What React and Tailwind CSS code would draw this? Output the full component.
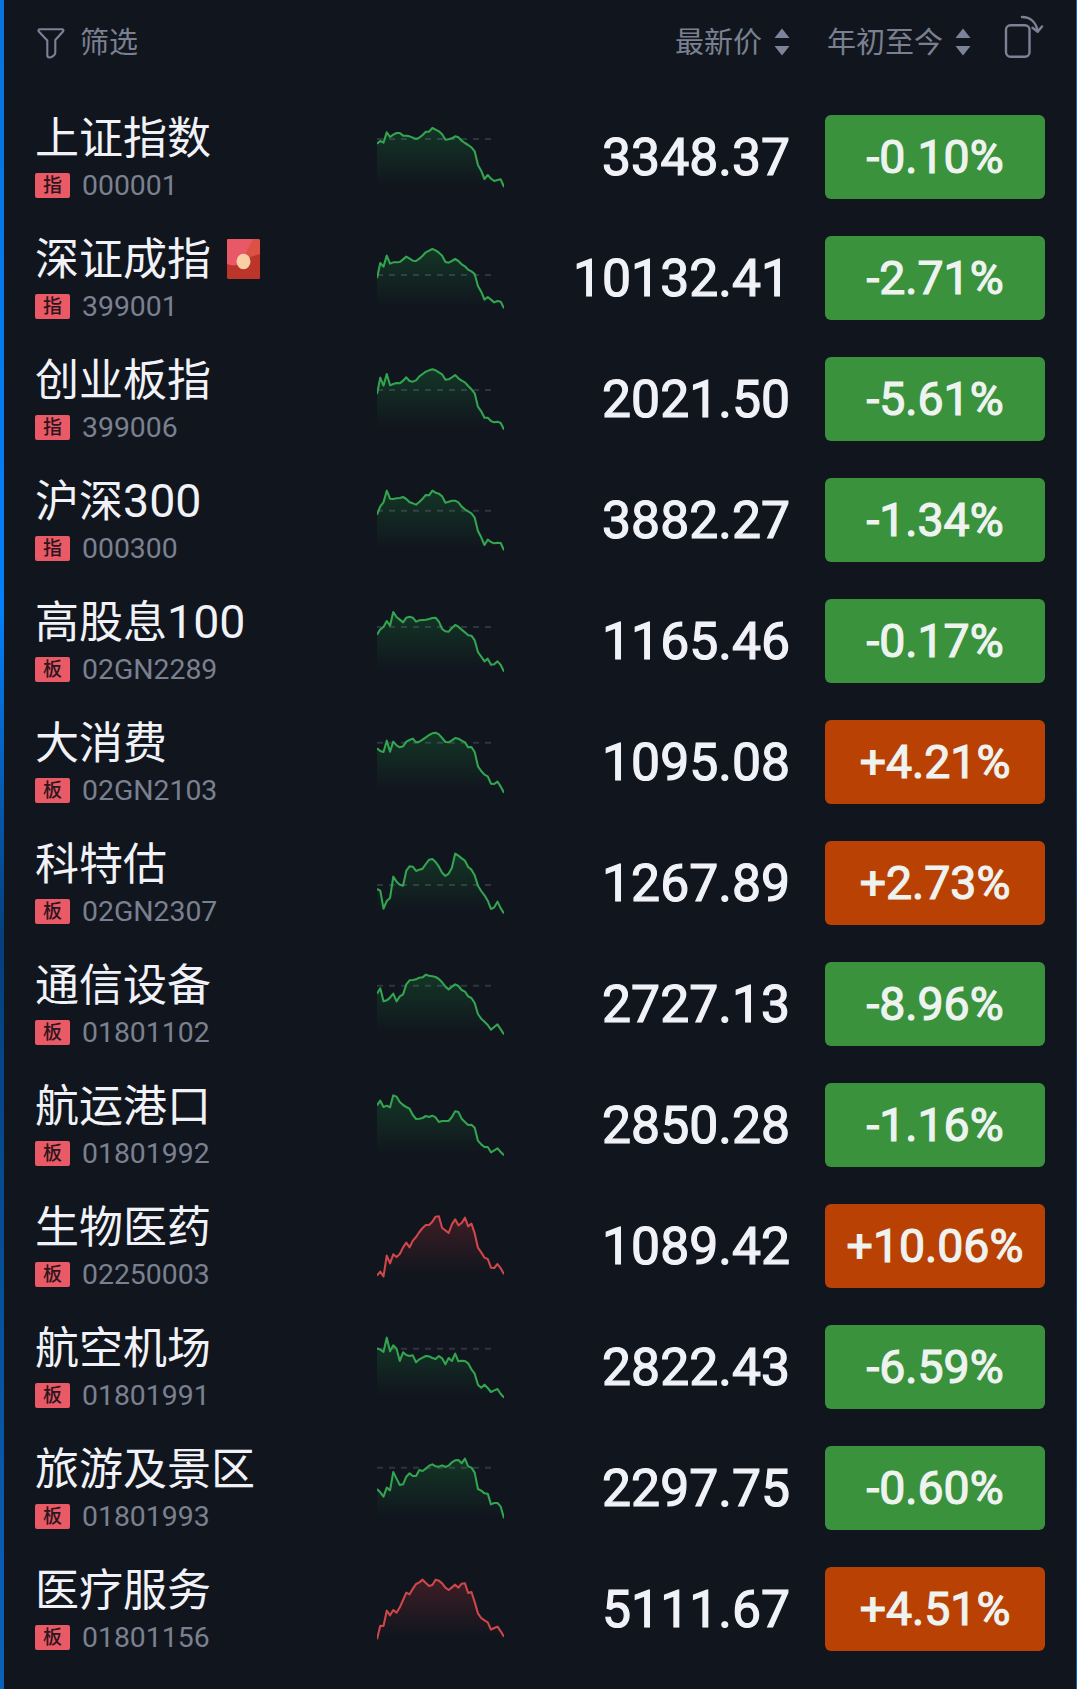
const rows = [
  {
    name: "上证指数",
    tag: "指",
    code: "000001",
    price: "3348.37",
    change: "-0.10%",
    base: 72,
    trend: [86, 78, 83, 52, 66, 59, 54, 54, 62, 62, 64, 68, 72, 68, 60, 50, 50, 39, 44, 49, 58, 74, 73, 70, 64, 67, 77, 84, 90, 97, 109, 150, 167, 192, 180, 191, 198, 195, 193, 216],
  },
  {
    name: "深证成指",
    tag: "指",
    code: "399001",
    price: "10132.41",
    change: "-2.71%",
    envelope: true,
    base: 117,
    trend: [127, 81, 92, 59, 83, 79, 79, 78, 70, 62, 68, 74, 75, 68, 59, 49, 44, 39, 43, 50, 59, 78, 80, 75, 69, 75, 85, 91, 101, 106, 114, 150, 167, 191, 183, 191, 199, 195, 197, 217],
  },
  {
    name: "创业板指",
    tag: "指",
    code: "399006",
    price: "2021.50",
    change: "-5.61%",
    base: 99,
    trend: [111, 62, 86, 51, 85, 81, 78, 79, 71, 61, 72, 74, 70, 58, 51, 44, 40, 37, 40, 46, 52, 68, 67, 61, 54, 64, 71, 76, 87, 97, 109, 149, 163, 182, 182, 192, 196, 194, 198, 218],
  },
  {
    name: "沪深",
    suffix: "300",
    tag: "指",
    code: "000300",
    price: "3882.27",
    change: "-1.34%",
    base: 98,
    trend: [110, 85, 73, 38, 62, 63, 61, 60, 57, 63, 73, 76, 80, 72, 62, 51, 52, 38, 44, 47, 55, 74, 71, 68, 68, 73, 86, 94, 100, 106, 119, 159, 178, 201, 185, 192, 196, 194, 195, 217],
  },
  {
    name: "高股息",
    suffix: "100",
    tag: "板",
    code: "02GN2289",
    price: "1165.46",
    change: "-0.17%",
    base: 84,
    trend: [107, 91, 84, 66, 80, 39, 54, 62, 70, 56, 53, 56, 68, 64, 63, 62, 60, 57, 56, 68, 90, 97, 98, 87, 78, 83, 92, 100, 109, 110, 124, 159, 173, 187, 179, 197, 196, 187, 198, 218],
  },
  {
    name: "大消费",
    tag: "板",
    code: "02GN2103",
    price: "1095.08",
    change: "+4.21%",
    base: 68,
    trend: [85, 93, 96, 62, 95, 65, 76, 82, 79, 65, 60, 56, 67, 65, 59, 52, 45, 40, 38, 43, 54, 66, 67, 61, 54, 56, 62, 67, 82, 81, 96, 139, 153, 164, 169, 191, 192, 185, 200, 218],
  },
  {
    name: "科特估",
    tag: "板",
    code: "02GN2307",
    price: "1267.89",
    change: "+2.73%",
    base: 132,
    trend: [144, 149, 203, 180, 171, 107, 122, 131, 134, 89, 76, 77, 90, 86, 83, 69, 56, 54, 63, 77, 95, 105, 98, 80, 38, 44, 52, 59, 78, 86, 103, 134, 150, 163, 179, 204, 199, 182, 202, 217],
  },
  {
    name: "通信设备",
    tag: "板",
    code: "01801102",
    price: "2727.13",
    change: "-8.96%",
    base: 71,
    trend: [95, 79, 118, 115, 107, 95, 118, 103, 97, 67, 55, 54, 52, 47, 46, 38, 41, 43, 45, 51, 61, 74, 82, 74, 67, 72, 84, 89, 103, 108, 123, 156, 170, 179, 189, 203, 195, 187, 202, 217],
  },
  {
    name: "航运港口",
    tag: "板",
    code: "01801992",
    price: "2850.28",
    change: "-1.16%",
    trend: [67, 53, 72, 68, 73, 37, 41, 57, 66, 72, 77, 96, 108, 107, 105, 99, 102, 98, 103, 117, 114, 114, 114, 102, 85, 87, 107, 117, 126, 125, 134, 173, 184, 192, 192, 208, 202, 196, 207, 217],
  },
  {
    name: "生物医药",
    tag: "板",
    code: "02250003",
    price: "1089.42",
    change: "+10.06%",
    red: true,
    trend: [215, 203, 217, 155, 178, 151, 159, 150, 130, 116, 130, 110, 99, 84, 72, 63, 63, 53, 38, 37, 72, 79, 87, 61, 46, 64, 57, 41, 67, 59, 88, 131, 145, 161, 165, 191, 192, 180, 193, 211],
  },
  {
    name: "航空机场",
    tag: "板",
    code: "01801991",
    price: "2822.43",
    change: "-6.59%",
    base: 71,
    trend: [70, 74, 81, 38, 79, 61, 71, 108, 82, 90, 93, 91, 112, 103, 98, 93, 94, 99, 102, 93, 100, 118, 99, 108, 86, 109, 107, 108, 115, 133, 146, 179, 188, 179, 189, 201, 196, 192, 207, 218],
  },
  {
    name: "旅游及景区",
    tag: "板",
    code: "01801993",
    price: "2297.75",
    change: "-0.60%",
    base: 65,
    trend: [129, 139, 152, 125, 133, 78, 98, 117, 115, 92, 82, 90, 90, 72, 75, 68, 59, 55, 61, 62, 58, 63, 59, 49, 43, 42, 52, 38, 61, 65, 80, 129, 134, 142, 143, 175, 171, 171, 182, 217],
  },
  {
    name: "医疗服务",
    tag: "板",
    code: "01801156",
    price: "5111.67",
    change: "+4.51%",
    red: true,
    trend: [217, 176, 177, 131, 145, 129, 137, 121, 99, 77, 82, 65, 51, 46, 38, 48, 57, 54, 38, 41, 49, 62, 69, 61, 53, 62, 50, 49, 78, 75, 105, 139, 153, 160, 166, 188, 183, 179, 193, 209],
  },
];

function Sparkline({ id, trend, base, red }) {
  const step = 381 / (trend.length - 1);
  const points = trend.map((y, i) => `${(i * step).toFixed(1)},${y}`).join(" ");
  const color = red ? "#d0474b" : "#33a450";

  return (
    <svg viewBox="0 0 381 252" className="w-[127px] h-[84px] shrink-0">
      <defs>
        <linearGradient id={id} gradientUnits="userSpaceOnUse" x1="0" y1="37" x2="0" y2="210">
          <stop offset="0" stopColor={red ? "#c8323c" : "#1a9a3c"} stopOpacity="0.24" />
          <stop offset="1" stopColor={red ? "#c8323c" : "#1a9a3c"} stopOpacity="0" />
        </linearGradient>
      </defs>
      <polygon points={`0,252 ${points} 381,252`} fill={`url(#${id})`} />
      {base && (
        <line x1="0" x2="342" y1={base} y2={base} stroke="#8a93a6" strokeOpacity="0.25" strokeWidth="6" strokeDasharray="18 18" />
      )}
      <polyline points={points} fill="none" stroke={color} strokeWidth="6.2" strokeLinejoin="round" />
    </svg>
  );
}

function FilterIcon() {
  return (
    <svg viewBox="0 0 28 31" className="w-7 h-[31px]" fill="none" stroke="#7b8296" strokeWidth="2.1" strokeLinejoin="round">
      <path d="M3 1.2h22c1.4 0 1.8 1.2 1 2.3L18.3 12v12.500c0 3-4.200 5-6 5-1.600 0-2-.9-2-2.500V12.500L1.800 3.600C1 2.400 1.600 1.200 3 1.200z" />
    </svg>
  );
}

function SortIcon() {
  return (
    <svg viewBox="0 0 16 28" className="w-4 h-7" fill="#7b849b">
      <path d="M8 0.500l7.500 9.500H.5z" />
      <path d="M8 27.500L.5 18h15z" />
    </svg>
  );
}

function RotateIcon() {
  return (
    <svg viewBox="0 0 40 44" className="w-10 h-11" fill="none" stroke="#7b8296" strokeWidth="2.4" strokeLinecap="round" strokeLinejoin="round">
      <rect x="2" y="10.300" width="23.500" height="31.500" rx="4.500" />
      <path d="M18 2c8.500 0 14 5.500 15.700 14M28.500 12.800l5.200 4L38 11.500" />
    </svg>
  );
}

function RedEnvelope() {
  return (
    <svg viewBox="0 0 33 40" className="w-[33px] h-10 ml-4 mb-0.5">
      <defs>
        <clipPath id="packet">
          <rect width="33" height="40" rx="1.500" />
        </clipPath>
      </defs>
      <g clipPath="url(#packet)">
        <rect width="33" height="40" fill="#bc352a" />
        <path d="M0 25L33 15V0H0z" fill="#dd5145" />
        <path d="M0 25C5 27 10 27 14 24L26 0H0z" fill="#e95866" />
      </g>
      <ellipse cx="16.500" cy="22.500" rx="7" ry="7.700" fill="#f8cfa6" />
    </svg>
  );
}

function App() {
  return (
    <main className="w-[1077px] h-[1689px] flex overflow-hidden bg-[#11161e] font-[Roboto,'Noto_Sans_CJK_SC',sans-serif]">
      <div className="w-1 shrink-0 bg-linear-to-b from-[#053f7c] from-55% to-[#0a62bc]">
        <div className="h-[940px] bg-linear-to-b from-[#0873dc] via-[#0580fa] via-65% to-[#053f7c]"></div>
      </div>

      <div className="flex-1 pl-[31px]">
        {/* Header */}
        <header className="h-[97px] flex items-start text-[29px] leading-[43px] text-[#7b8090]">
          <div className="flex items-start pl-0.5 pt-[22px]">
            <div className="pt-1.5">
              <FilterIcon />
            </div>
            <span className="ml-[15px]">筛选</span>
          </div>
          <div className="ml-auto flex items-start pt-[22px]">
            <span>最新价</span>
            <div className="ml-3 pt-1.5">
              <SortIcon />
            </div>
          </div>
          <div className="ml-[37px] flex items-start pt-[22px]">
            <span>年初至今</span>
            <div className="ml-3 pt-1.5">
              <SortIcon />
            </div>
          </div>
          <div className="ml-[33px] mr-8 pt-[15px]">
            <RotateIcon />
          </div>
        </header>

        {/* Index list */}
        <ul>
          {rows.map((row) => (
            <li key={row.code} className="h-[121px] pt-[18px] flex items-start">
              <div className="w-[342px] shrink-0">
                <div className="-mt-px h-[50px] flex items-center text-[44px] leading-[51px] text-[#f1f2f7] whitespace-nowrap">
                  <span>{row.name}</span>
                  {row.suffix && <span className="-mt-0.5 text-[46.5px]">{row.suffix}</span>}
                  {row.envelope && <RedEnvelope />}
                </div>
                <div className="mt-[9px] h-[25px] flex items-center">
                  <span className="w-[35px] h-[25px] rounded-xs bg-[#ea5a66] text-[#2c161d] text-[19px] leading-[25px] font-medium text-center">
                    {row.tag}
                  </span>
                  <span className="ml-3 text-[28.4px] leading-[25px] text-[#7b8090]">{row.code}</span>
                </div>
              </div>

              <Sparkline id={`fill-${row.code}`} trend={row.trend} base={row.base} red={row.red} />

              <div className="flex-1 pr-[35px] text-right text-[51.7px] leading-[86px] text-[#f1f2f7] [-webkit-text-stroke:1.2px]">
                {row.price}
              </div>

              <div
                className={`w-[220px] h-[84px] mr-[31px] shrink-0 rounded-md text-center text-[46.4px] leading-[84px] text-[#eef3f0] [-webkit-text-stroke:1.2px] ${
                  row.change.startsWith("+") ? "bg-[#ba4104]" : "bg-[#3a923d]"
                }`}
              >
                {row.change}
              </div>
            </li>
          ))}
        </ul>
      </div>

      <div className="w-px shrink-0 bg-linear-to-b from-[#1565bd] from-45% via-[#053f7c] via-55% to-[#0a62bc]"></div>
    </main>
  );
}

export default App;
